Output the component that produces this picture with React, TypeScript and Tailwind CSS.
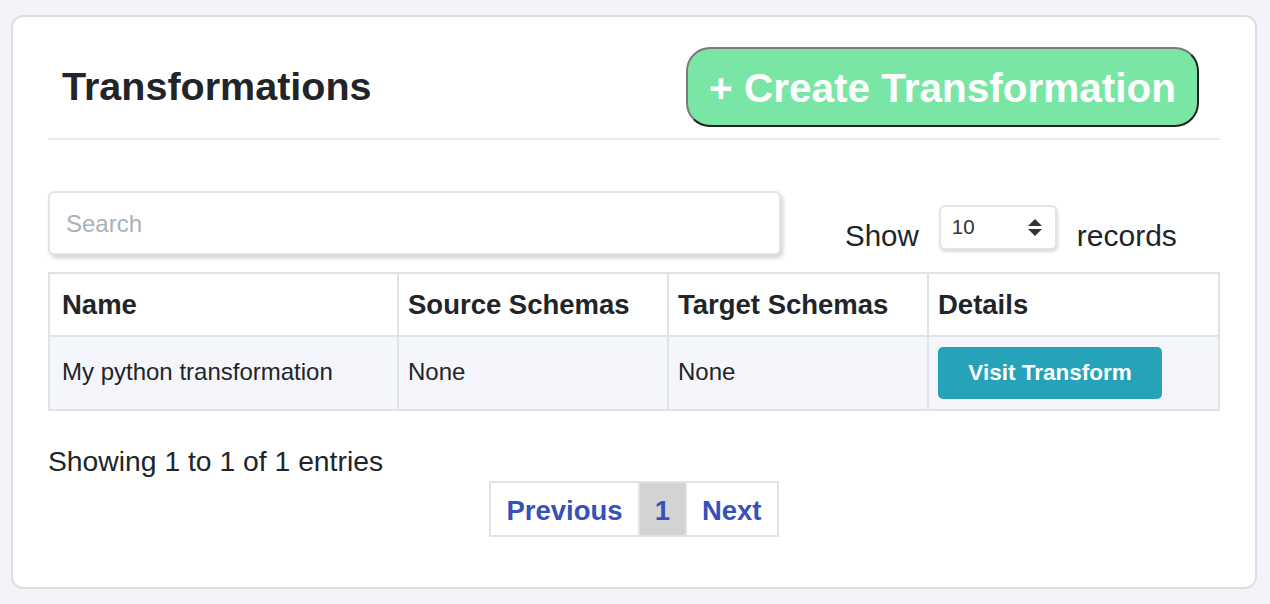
import React from "react";

export default function App() {
  return (
    <div
      className="min-h-screen bg-[#f3f4f9] pt-[15px] pl-[11px] pr-[13px] pb-[15px] text-[#212529]"
      style={{ fontFamily: '"Liberation Sans", Arial, Helvetica, sans-serif' }}
    >
      <div className="h-[574px] rounded-[12px] border-2 border-[#dedede] bg-white px-[35px]">
        {/* Header */}
        <div className="flex items-center justify-between border-b-2 border-[#ececec] pl-[14px] pr-[21px] pt-[30px] pb-[11px]">
          <h1 className="text-[39.5px] font-bold leading-none">Transformations</h1>
          <button className="flex h-[80px] w-[513px] items-center justify-center rounded-[24px] border-2 border-t-[#7a7a7a] border-l-[#7a7a7a] border-r-[#222] border-b-[#222] bg-[#7ae6a6] pt-[2px] text-[40.5px] font-bold leading-none text-white">
            + Create Transformation
          </button>
        </div>

        {/* Search row */}
        <div className="mt-[51px] flex items-start">
          <div className="flex h-[64px] w-[733px] items-center rounded-[6px] border-2 border-[#e2e4e8] bg-white pl-[16px] pt-[2px] shadow-[2px_3px_4px_rgba(0,0,0,0.18)]">
            <span className="text-[24px] text-[#a9b0b8]">Search</span>
          </div>
          <div className="ml-[64px] mt-[14px] flex items-start">
            <span className="mt-[14px] text-[29.5px] leading-[34px]">Show</span>
            <div className="ml-[20px] flex h-[45px] w-[118px] items-start justify-between rounded-[6px] border-2 border-[#e2e4e8] bg-white pl-[11px] pr-[13px] pt-[9px] shadow-[1px_2px_3px_rgba(0,0,0,0.15)]">
              <span className="text-[20.5px] leading-[22px] text-[#333]">10</span>
              <svg width="14" height="22" viewBox="0 0 14 22" className="mt-[1px]">
                <path d="M7 2 L14 9 L0 9 Z" fill="#333" />
                <path d="M0 12 L14 12 L7 19 Z" fill="#333" />
              </svg>
            </div>
            <span className="ml-[20px] mt-[14px] text-[30px] leading-[34px]">records</span>
          </div>
        </div>

        {/* Table */}
        <table className="mt-[17px] w-full table-fixed border-collapse border-2 border-[#dfe2e6]">
          <colgroup>
            <col className="w-[349px]" />
            <col className="w-[270px]" />
            <col className="w-[260px]" />
            <col />
          </colgroup>
          <thead>
            <tr className="h-[63px] bg-white">
              <th className="border-2 border-[#dfe2e6] px-[12px] text-left text-[27.5px] font-bold">Name</th>
              <th className="border-2 border-[#dfe2e6] px-[9px] text-left text-[27.5px] font-bold">Source Schemas</th>
              <th className="border-2 border-[#dfe2e6] px-[9px] text-left text-[27.5px] font-bold">Target Schemas</th>
              <th className="border-2 border-[#dfe2e6] px-[9px] text-left text-[27.5px] font-bold">Details</th>
            </tr>
          </thead>
          <tbody>
            <tr className="h-[74px] bg-[#f5f6fb]">
              <td className="border-2 border-[#dfe2e6] px-[12px] pb-[3px] text-[24px]">My python transformation</td>
              <td className="border-2 border-[#dfe2e6] px-[9px] pb-[3px] text-[24px]">None</td>
              <td className="border-2 border-[#dfe2e6] px-[9px] pb-[3px] text-[24px]">None</td>
              <td className="border-2 border-[#dfe2e6] px-[9px]">
                <button className="flex h-[52px] w-[224px] items-center justify-center rounded-[5px] bg-[#26a3b9] text-[22.5px] font-bold text-white">
                  Visit Transform
                </button>
              </td>
            </tr>
          </tbody>
        </table>

        {/* Footer */}
        <div className="mt-[34px] text-[28.3px] leading-[32px]">Showing 1 to 1 of 1 entries</div>
        <div className="mt-[4px] flex justify-center">
          <div className="flex h-[56px] items-stretch border-2 border-[#dfe2e6] text-[27.5px] font-bold text-[#3651b9]">
            <span className="flex items-center border-r-2 border-[#dfe2e6] px-[15px] pt-[3px]">Previous</span>
            <span className="flex items-center bg-[#d3d3d3] px-[15px] pt-[3px]">1</span>
            <span className="flex items-center border-l-2 border-[#dfe2e6] px-[15px] pt-[3px]">Next</span>
          </div>
        </div>
      </div>
    </div>
  );
}
